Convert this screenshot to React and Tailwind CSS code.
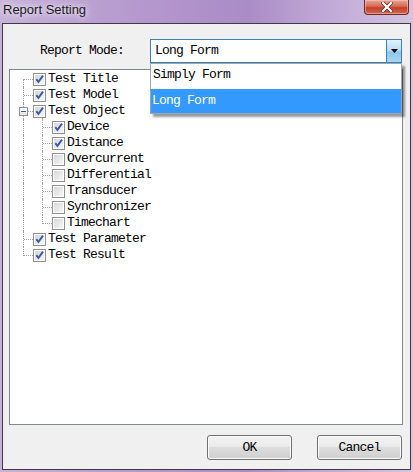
import React from "react";

function Check({ checked }) {
  return (
    <span className="relative flex w-[13px] h-[13px] shrink-0 border border-[#8e8f8f] bg-white p-px">
      <span className="flex-1 bg-gradient-to-br from-[#d6d7d9] to-[#f7f7f7]" />
      {checked && (
        <svg className="absolute left-0 top-0" width="11" height="11" viewBox="0 0 11 11">
          <path d="M2.3 5.2 L4.4 7.9 L9 1.6" fill="none" stroke="#3d5aa6" strokeWidth="1.9" strokeLinejoin="miter" />
        </svg>
      )}
    </span>
  );
}

const rows = [
  { label: "Test Title", level: 1, checked: true, first: true },
  { label: "Test Model", level: 1, checked: true },
  { label: "Test Object", level: 1, checked: true, expand: true },
  { label: "Device", level: 2, checked: true },
  { label: "Distance", level: 2, checked: true },
  { label: "Overcurrent", level: 2 },
  { label: "Differential", level: 2 },
  { label: "Transducer", level: 2 },
  { label: "Synchronizer", level: 2 },
  { label: "Timechart", level: 2, last2: true },
  { label: "Test Parameter", level: 1, checked: true },
  { label: "Test Result", level: 1, checked: true, last: true },
];

function Row({ r }) {
  const dot = "border-[#a0a0a0] border-dotted";
  return (
    <div className={`relative flex h-4 items-center ${r.level === 1 ? "pl-[23px]" : "pl-[42px]"}`}>
      {r.first ? (
        <span className={`absolute left-[13px] top-[8px] bottom-0 border-l ${dot}`} />
      ) : r.last ? (
        <span className={`absolute left-[13px] top-0 h-[9px] border-l ${dot}`} />
      ) : (
        <span className={`absolute left-[13px] top-0 bottom-0 border-l ${dot}`} />
      )}
      {r.level === 1 && <span className={`absolute left-[14px] top-[8px] w-[9px] border-t ${dot}`} />}
      {r.level === 2 && (
        <>
          {r.last2 ? (
            <span className={`absolute left-[32px] top-0 h-[9px] border-l ${dot}`} />
          ) : (
            <span className={`absolute left-[32px] top-0 bottom-0 border-l ${dot}`} />
          )}
          <span className={`absolute left-[33px] top-[8px] w-[9px] border-t ${dot}`} />
        </>
      )}
      {r.expand && (
        <>
          <span className={`absolute left-[32px] top-[12px] bottom-0 border-l ${dot}`} />
          <span className="absolute left-[9px] top-[4px] flex h-[9px] w-[9px] items-center justify-center border border-[#919191] bg-gradient-to-b from-white to-[#e3e3e3]">
            <span className="h-px w-[5px] bg-[#2a5fb0]" />
          </span>
        </>
      )}
      <Check checked={r.checked} />
      <span className="ml-[2px] whitespace-pre leading-4">{r.label}</span>
    </div>
  );
}

function Btn({ children }) {
  return (
    <button className="flex h-[25px] w-[85px] items-center justify-center rounded-[3px] border border-[#707070] bg-[linear-gradient(#f2f2f2,#ebebeb_45%,#dddddd_50%,#cfcfcf)] shadow-[inset_0_0_0_1px_#fbfbfb] text-black">
      {children}
    </button>
  );
}

export default function App() {
  return (
    <div className="relative flex h-[472px] w-[413px] flex-col overflow-hidden bg-[linear-gradient(90deg,#c7b3d9,#b89ed0_25%,#b193cb_45%,#a98cc6_60%,#c0a8d6_78%,#d3c3e1)]">
      <div className="flex h-[23px] shrink-0 items-center pl-[3px] pb-[3px] font-['Liberation_Sans',sans-serif] text-[13px] text-[#1b1b1b] [text-shadow:0_0_5px_#f2eaf8,0_0_8px_#f2eaf8]">
        Report Setting
      </div>
      <div className="absolute right-[4px] top-0 flex h-[15px] w-[45px] items-center justify-center rounded-b-[4px] border border-t-0 border-[#6b2a22] bg-[linear-gradient(#e8a597,#d66b55_45%,#c2412b_55%,#d1654f)] shadow-[inset_0_0_0_1px_rgba(255,210,200,0.5)]">
        <svg width="12" height="10" viewBox="0 0 12 10">
          <path d="M2 1 L10 9 M10 1 L2 9" stroke="#5a2a2a" strokeWidth="3.6" strokeLinecap="square" />
          <path d="M2 1 L10 9 M10 1 L2 9" stroke="#ffffff" strokeWidth="2.2" strokeLinecap="square" />
        </svg>
      </div>
      <div className="mx-[2px] mb-[2px] flex flex-1 flex-col border border-[#3f3a46] bg-[#f0f0f0] font-['Liberation_Mono',monospace] text-[13px] tracking-[-0.8px] text-black">
        <div className="mt-[15px] flex h-[24px] items-center">
          <span className="ml-[37px] w-[110px] whitespace-pre">Report Mode:</span>
          <div className="relative flex h-[24px] w-[252px] border border-[#3c7fb1] bg-white">
            <span className="flex flex-1 items-center pl-[4px]">Long Form</span>
            <span className="flex w-[15px] items-center justify-center border-l border-[#3c7fb1] bg-[linear-gradient(#e3f2fb,#b9def5_45%,#8ec7ec_55%,#a7d5f2)]">
              <svg width="7" height="4" viewBox="0 0 7 4">
                <path d="M0 0 H7 L3.5 4 Z" fill="#000" />
              </svg>
            </span>
            <div className="absolute left-[-1px] top-[23px] z-10 flex w-[252px] flex-col border border-[#9aa6b3] bg-white shadow-[3px_3px_2px_rgba(0,0,0,0.4)]">
              <div className="flex h-[25px] items-start pl-[2px] pt-[3px] leading-4">Simply Form</div>
              <div className="flex h-[24px] items-center bg-[#3399ff] pl-[1px] text-white">Long Form</div>
            </div>
          </div>
        </div>
        <div className="ml-[6px] mt-[6px] h-[356px] w-[394px] border border-[#828790] bg-white pt-px">
          {rows.map((r) => (
            <Row key={r.label} r={r} />
          ))}
        </div>
        <div className="mr-[8px] mt-[10px] flex justify-end gap-[25px]">
          <Btn>OK</Btn>
          <Btn>Cancel</Btn>
        </div>
      </div>
    </div>
  );
}
